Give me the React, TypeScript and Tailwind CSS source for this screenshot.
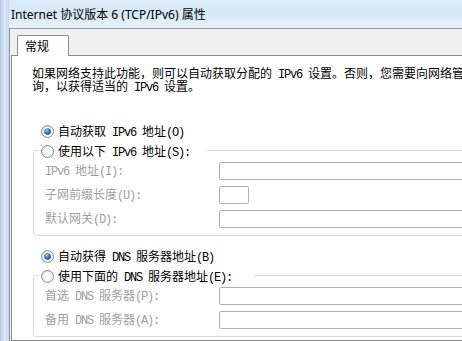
import type { ReactNode } from "react";

function M({ children }: { children: ReactNode }) {
  return <span className="font-['Liberation_Mono',monospace] tracking-[-1.2px]">{children}</span>;
}

function Radio({ checked, id }: { checked?: boolean; id: string }) {
  return (
    <svg width="13" height="13" viewBox="0 0 13 13" className="shrink-0">
      <defs>
        <linearGradient id={`${id}-bg`} x1="0" y1="0" x2="1" y2="1">
          <stop offset="0" stopColor="#d4d4d4" />
          <stop offset="1" stopColor="#fdfdfd" />
        </linearGradient>
        <radialGradient id={`${id}-dot`} cx="0.4" cy="0.35" r="0.7">
          <stop offset="0" stopColor="#8fd8ff" />
          <stop offset="0.5" stopColor="#2a83c4" />
          <stop offset="1" stopColor="#0b3f6e" />
        </radialGradient>
      </defs>
      <circle cx="6.5" cy="6.5" r="6" fill={`url(#${id}-bg)`} stroke="#8e8f8f" />
      <circle cx="6.5" cy="6.5" r="4.5" fill="#f6f6f6" />
      {checked && <circle cx="6.5" cy="6.5" r="3.3" fill={`url(#${id}-dot)`} />}
    </svg>
  );
}

function RadioRow({ id, checked, children }: { id: string; checked?: boolean; children: ReactNode }) {
  return (
    <div className="flex h-[21px] items-center gap-[4px] whitespace-nowrap">
      <Radio id={id} checked={checked} />
      <span>{children}</span>
    </div>
  );
}

type Field = { label: ReactNode; short?: boolean };

function GroupBox({ id, legend, legendWidth, fields }: { id: string; legend: ReactNode; legendWidth: string; fields: Field[] }) {
  return (
    <div className="relative ml-[21px] mt-[8px] w-[480px] rounded-[3px] border border-[#d5dfe5] pb-[7px] pl-[11px] pt-[11px]">
      <div className={`absolute left-[5px] top-[-6px] flex h-[13px] items-center gap-[4px] whitespace-nowrap bg-white pl-[2px] ${legendWidth}`}>
        <Radio id={id} />
        <span>{legend}</span>
      </div>
      <div className="grid grid-cols-[174px_1fr] gap-y-[6px]">
        {fields.map((f, i) => (
          <div key={i} className="contents">
            <div className="flex h-[18px] items-center whitespace-nowrap text-[#a0a0a0]">
              <span>{f.label}</span>
            </div>
            <div className={`h-[18px] rounded-[2px] border border-[#adb2b5] bg-white ${f.short ? "w-[30px]" : "w-full"}`} />
          </div>
        ))}
      </div>
    </div>
  );
}

export default function App() {
  return (
    <div className="flex h-[341px] w-[462px] overflow-hidden bg-[#f0f0f0] font-['Noto_Sans_CJK_SC',sans-serif] text-[12px] leading-[13px] text-black">
      <div className="w-[9px] shrink-0 bg-gradient-to-r from-[#b3c9e2] via-[#dbe8f5] to-[#c4d7ec]" />
      <div className="flex min-w-0 flex-1 flex-col">
        <div className="flex h-[29px] shrink-0 items-center border-b border-[#8e99a6] bg-gradient-to-b from-[#dcecf8] via-[#d4e8f6] to-[#eaf4fb] pl-[2px] font-['Noto_Sans','Noto_Sans_CJK_SC',sans-serif] whitespace-nowrap">
          Internet 协议版本 6 (TCP/IPv6) 属性
        </div>
        <div className="flex flex-1 flex-col border-l border-[#8796a8] pl-[1px]">
          <div className="flex pl-[6px] pt-[6px]">
            <div className="relative z-10 -mb-[1px] h-[21px] w-[52px] rounded-t-[2px] border border-b-0 border-[#898c95] bg-white pl-[7px] pt-[3px]">
              常规
            </div>
          </div>
          <div className="flex w-[520px] flex-1 flex-col items-start border border-[#898c95] bg-white">
            <div className="ml-[20px] mt-[10px] whitespace-nowrap">
              <div className="h-[13px]">
                如果网络支持此功能，则可以自动获取分配的<M> IPv6 </M>设置。否则，您需要向网络管理员咨
              </div>
              <div className="h-[13px]">
                询，以获得适当的<M> IPv6 </M>设置。
              </div>
            </div>
            <div className="ml-[29px] mt-[29px]">
              <RadioRow id="r1" checked>
                自动获取<M> IPv6 </M>地址<M>(O)</M>
              </RadioRow>
            </div>
            <GroupBox
              id="r2"
              legendWidth="w-[168px]"
              legend={<>使用以下<M> IPv6 </M>地址<M>(S):</M></>}
              fields={[
                { label: <><M>IPv6 </M>地址<M>(I):</M></> },
                { label: <>子网前缀长度<M>(U):</M></>, short: true },
                { label: <>默认网关<M>(D):</M></> },
              ]}
            />
            <div className="ml-[29px] mt-[10px]">
              <RadioRow id="r3" checked>
                自动获得<M> DNS </M>服务器地址<M>(B)</M>
              </RadioRow>
            </div>
            <GroupBox
              id="r4"
              legendWidth="w-[215px]"
              legend={<>使用下面的<M> DNS </M>服务器地址<M>(E):</M></>}
              fields={[
                { label: <>首选<M> DNS </M>服务器<M>(P):</M></> },
                { label: <>备用<M> DNS </M>服务器<M>(A):</M></> },
              ]}
            />
          </div>
        </div>
      </div>
    </div>
  );
}
